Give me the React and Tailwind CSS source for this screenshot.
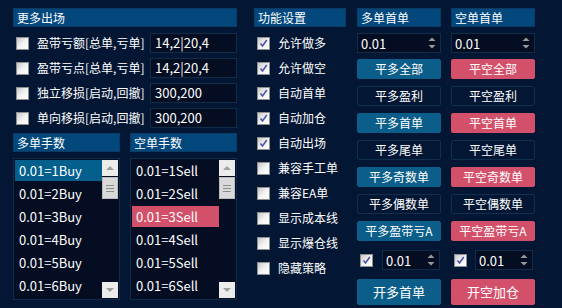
import React from "react";

const font = { fontFamily: '"Noto Sans CJK SC", "Noto Sans", sans-serif' };

function Box({ checked }) {
  return (
    <span className="relative inline-flex w-[13px] h-[13px] shrink-0 border border-[#8f8f8f] bg-gradient-to-br from-[#c8c8c8] via-[#f2f2f2] to-[#ffffff]">
      {checked && (
        <svg viewBox="0 0 11 11" className="absolute inset-0 w-[11px] h-[11px]">
          <path d="M2.5 5.5 L4.5 8 L8.8 2" fill="none" stroke="#4a55a8" strokeWidth="1.6" />
        </svg>
      )}
    </span>
  );
}

function Header({ children, className = "" }) {
  return (
    <div className={"h-[19px] bg-[#02487d] border border-[#0b3a63] text-white text-[12px] leading-[17px] pl-[3px] " + className}>
      {children}
    </div>
  );
}

function Spinner({ className = "" }) {
  return (
    <div className={"h-[20px] bg-[#040d22] border border-[#0e2e48] flex items-center justify-between pl-[3px] pr-[4px] " + className}>
      <span className="text-white text-[13px] leading-none">0.01</span>
      <svg viewBox="0 0 8 14" className="w-[8px] h-[14px]">
        <path d="M0.5 5 L4 1.5 L7.5 5 Z" fill="#9a9a9a" />
        <path d="M0.5 9 L4 12.5 L7.5 9 Z" fill="#9a9a9a" />
      </svg>
    </div>
  );
}

function Btn({ kind, children, className = "" }) {
  const cls =
    kind === "blue"
      ? "bg-[#0b5e89] border-[#0b5e89]"
      : kind === "red"
      ? "bg-[#d3506a] border-[#d3506a]"
      : "bg-[#031634] border-[#0f3150]";
  return (
    <div className={"h-[20px] rounded-[2px] border flex items-center justify-center text-white text-[12px] " + cls + " " + className}>
      {children}
    </div>
  );
}

function ScrollBar() {
  return (
    <div className="absolute right-[1px] top-[1px] bottom-[1px] w-[16px] flex flex-col justify-between">
      <div className="flex flex-col">
        <div className="h-[16px] bg-[#ececec] flex items-center justify-center">
          <svg viewBox="0 0 8 4" className="w-[8px] h-[4px]"><path d="M0 4 L4 0 L8 4 Z" fill="#a0a0a0" /></svg>
        </div>
        <div className="h-[22px] mt-[1px] bg-[#d9d9d9] border border-[#bdbdbd] flex flex-col items-center justify-center gap-[2px]">
          <span className="w-[8px] h-[1px] bg-[#8d8d8d]" />
          <span className="w-[8px] h-[1px] bg-[#8d8d8d]" />
          <span className="w-[8px] h-[1px] bg-[#8d8d8d]" />
        </div>
      </div>
      <div className="h-[16px] bg-[#ececec] flex items-center justify-center">
        <svg viewBox="0 0 8 4" className="w-[8px] h-[4px]"><path d="M0 0 L4 4 L8 0 Z" fill="#a0a0a0" /></svg>
      </div>
    </div>
  );
}

function ListBox({ items, sel, selColor }) {
  return (
    <div className="relative h-[142px] bg-[#040d22] border border-[#0e2b47] pt-[1px] pl-[1px]">
      {items.map((t, i) => (
        <div
          key={t}
          className={"h-[21px] mb-[2px] w-[87px] pl-[4px] flex items-center text-white text-[13px] " + (i === sel ? selColor : "")}
        >
          {t}
        </div>
      ))}
      <ScrollBar />
    </div>
  );
}

export default function App() {
  const exits = [
    ["盈带亏额[总单,亏单]", "14,2|20,4"],
    ["盈带亏点[总单,亏单]", "14,2|20,4"],
    ["独立移损[启动,回撤]", "300,200"],
    ["单向移损[启动,回撤]", "300,200"],
  ];
  const settings = [
    ["允许做多", true],
    ["允许做空", true],
    ["自动首单", true],
    ["自动加仓", true],
    ["自动出场", true],
    ["兼容手工单", false],
    ["兼容EA单", false],
    ["显示成本线", false],
    ["显示爆仓线", false],
    ["隐藏策略", false],
  ];
  const buy = [1, 2, 3, 4, 5, 6].map((n) => "0.01=" + n + "Buy");
  const sell = [1, 2, 3, 4, 5, 6].map((n) => "0.01=" + n + "Sell");
  const rows = [
    ["平多全部", "blue", "平空全部", "red"],
    ["平多盈利", "out", "平空盈利", "out"],
    ["平多首单", "blue", "平空首单", "red"],
    ["平多尾单", "out", "平空尾单", "out"],
    ["平多奇数单", "blue", "平空奇数单", "red"],
    ["平多偶数单", "out", "平空偶数单", "out"],
    ["平多盈带亏A", "blue", "平空盈带亏A", "red"],
  ];

  return (
    <div className="w-[562px] h-[308px] bg-[#031634] flex pl-[13px] pt-[8px] overflow-hidden" style={font}>
      {/* left column */}
      <div className="w-[224px] flex flex-col gap-[6px]">
        <Header>更多出场</Header>
        {exits.map(([label, val]) => (
          <div key={label} className="h-[19px] flex items-center">
            <div className="ml-[3px]"><Box /></div>
            <span className="ml-[8px] text-white text-[12px] w-[113px] whitespace-nowrap">{label}</span>
            <div className="w-[87px] h-[20px] bg-[#040d22] border border-[#0e2e48] text-white text-[13px] leading-[18px] pl-[4px]">{val}</div>
          </div>
        ))}
        <div className="flex gap-[10px]">
          <div className="w-[107px] flex flex-col gap-[6px]">
            <Header>多单手数</Header>
            <ListBox items={buy} sel={0} selColor="bg-[#03608c]" />
          </div>
          <div className="w-[107px] flex flex-col gap-[6px]">
            <Header>空单手数</Header>
            <ListBox items={sell} sel={2} selColor="bg-[#d3506a]" />
          </div>
        </div>
      </div>

      {/* middle column */}
      <div className="w-[92px] ml-[17px] flex flex-col gap-[6px]">
        <Header>功能设置</Header>
        {settings.map(([label, c]) => (
          <div key={label} className="h-[19px] flex items-center">
            <div className="ml-[3px]"><Box checked={c} /></div>
            <span className="ml-[8px] text-white text-[12px] whitespace-nowrap">{label}</span>
          </div>
        ))}
      </div>

      {/* right column */}
      <div className="w-[178px] ml-[11px] flex flex-col">
        <div className="grid grid-cols-2 gap-x-[10px]">
          <Header>多单首单</Header>
          <Header>空单首单</Header>
        </div>
        <div className="grid grid-cols-2 gap-x-[10px] mt-[6px]">
          <Spinner />
          <Spinner />
        </div>
        <div className="grid grid-cols-2 gap-x-[10px] gap-y-[7px] mt-[6px]">
          {rows.map(([a, ka, b, kb]) => (
            <React.Fragment key={a}>
              <Btn kind={ka}>{a}</Btn>
              <Btn kind={kb}>{b}</Btn>
            </React.Fragment>
          ))}
          <div className="flex items-center">
            <div className="ml-[3px]"><Box checked /></div>
            <Spinner className="ml-[9px] w-[58px]" />
          </div>
          <div className="flex items-center">
            <div className="ml-[3px]"><Box checked /></div>
            <Spinner className="ml-[8px] w-[58px]" />
          </div>
          <Btn kind="blue" className="h-[26px] text-[13px]">开多首单</Btn>
          <Btn kind="red" className="h-[26px] text-[13px]">开空加仓</Btn>
        </div>
      </div>
    </div>
  );
}
